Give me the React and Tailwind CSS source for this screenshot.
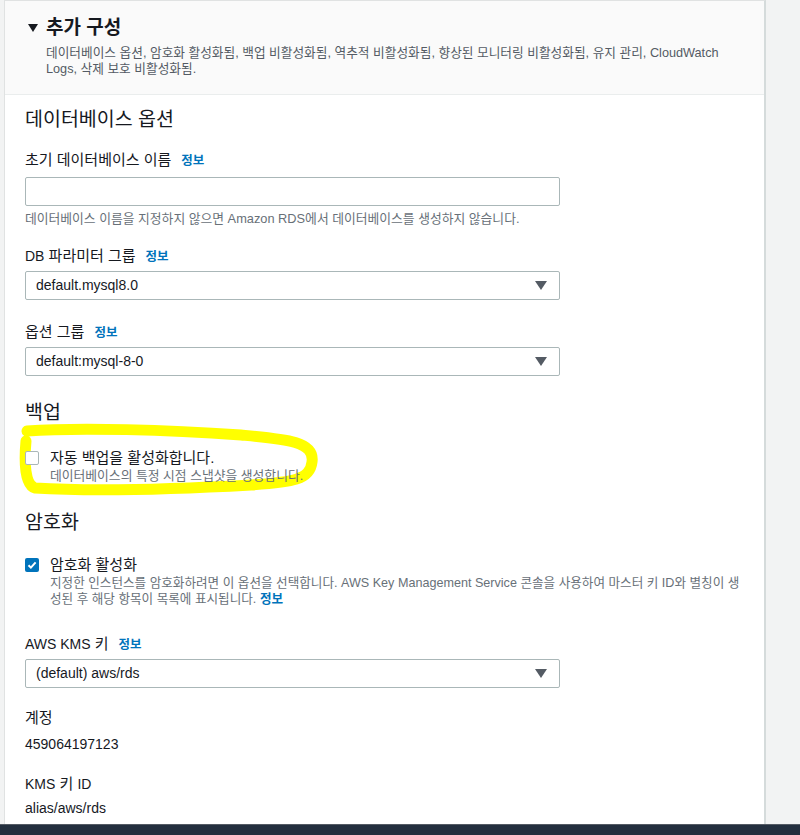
import React from "react";

const font = { fontFamily: '"Liberation Sans", "Noto Sans CJK KR", sans-serif' };

function Info() {
    return <span className="ml-[10px] text-[12.5px] font-bold text-[#0073bb]">정보</span>;
}

function Label({ children, info }) {
    return (
        <div className="text-[15px] leading-[20px] text-[#16191f]">
            {children}
            {info && <Info />}
        </div>
    );
}

function Select({ value }) {
    return (
        <div className="mt-[4px] flex h-[29px] w-[535px] items-center justify-between border border-[#aab7b8] rounded-[2px] pl-[10px] pr-[12px] text-[14px] text-[#16191f]">
            <span>{value}</span>
            <svg width="12" height="9" viewBox="0 0 12 9"><path d="M0 0h12L6 9z" fill="#545b64" /></svg>
        </div>
    );
}

function Checkbox({ checked }) {
    return checked ? (
        <div className="mt-[3px] flex h-[14px] w-[14px] shrink-0 items-center justify-center rounded-[2px] bg-[#0073bb]">
            <svg width="10" height="10" viewBox="0 0 10 10"><path d="M1.5 5.2l2.4 2.4L8.6 2.4" stroke="white" strokeWidth="2" fill="none" /></svg>
        </div>
    ) : (
        <div className="mt-[3px] h-[14px] w-[14px] shrink-0 rounded-[2px] border border-[#aab7b8] bg-white" />
    );
}

export default function App() {
    return (
        <div style={font} className="flex h-[835px] flex-col bg-[#f2f3f3]">
            <div className="flex flex-1 overflow-hidden">
                <div className="ml-[4px] w-[762px] border-l border-r-2 border-t border-[#e0e2e2] bg-white border-r-[#d5dbdb]">
                    <div className="h-[94px] border-b border-[#eaeded] bg-[#fafafa] pl-[23px] pt-[13px]">
                        <div className="flex items-center">
                            <svg width="10" height="8" viewBox="0 0 10 8"><path d="M0 0h10L5 8z" fill="#16191f" /></svg>
                            <span className="ml-[8px] text-[19px] font-bold leading-[28px] text-[#16191f]">추가 구성</span>
                        </div>
                        <div className="ml-[18px] mt-[3px] whitespace-nowrap text-[12.7px] leading-[16px] text-[#545b64]">
                            데이터베이스 옵션, 암호화 활성화됨, 백업 비활성화됨, 역추적 비활성화됨, 향상된 모니터링 비활성화됨, 유지 관리, CloudWatch<br />
                            Logs, 삭제 보호 비활성화됨.
                        </div>
                    </div>

                    <div className="pl-[20px] pt-[10px]">
                        <div className="text-[19.5px] leading-[28px] text-[#16191f]">데이터베이스 옵션</div>

                        <div className="mt-[17px]">
                            <Label info>초기 데이터베이스 이름</Label>
                            <div className="mt-[6px] h-[29px] w-[535px] rounded-[2px] border border-[#aab7b8]" />
                            <div className="mt-[5px] whitespace-nowrap text-[12.8px] leading-[16px] text-[#687078]">데이터베이스 이름을 지정하지 않으면 Amazon RDS에서 데이터베이스를 생성하지 않습니다.</div>
                        </div>

                        <div className="mt-[19px]">
                            <Label info><span className="text-[14px]">DB</span> 파라미터 그룹</Label>
                            <Select value="default.mysql8.0" />
                        </div>

                        <div className="mt-[22px]">
                            <Label info>옵션 그룹</Label>
                            <Select value="default:mysql-8-0" />
                        </div>

                        <div className="mt-[22px] text-[19.5px] leading-[28px] text-[#16191f]">백업</div>

                        <div className="relative mt-[22px]">
                            <svg className="pointer-events-none absolute left-[-6px] top-[-25px]" width="306" height="76" viewBox="0 0 306 76">
                                <path d="M8 8 C60 4 150 7 222 12 C266 16 296 18 293 39 C291 57 274 59 232 62 C160 66 80 69 16 65 C6 62 5 40 7 18" stroke="#ffff00" strokeWidth="11" fill="none" strokeLinecap="round" />
                            </svg>
                            <div className="relative flex gap-[11px]">
                                <Checkbox />
                                <div>
                                    <div className="text-[15px] leading-[20px] text-[#16191f]">자동 백업을 활성화합니다.</div>
                                    <div className="text-[12.8px] leading-[16px] text-[#687078]">데이터베이스의 특정 시점 스냅샷을 생성합니다.</div>
                                </div>
                            </div>
                        </div>

                        <div className="mt-[24px] text-[19.5px] leading-[28px] text-[#16191f]">암호화</div>

                        <div className="mt-[19px] flex gap-[11px]">
                            <Checkbox checked />
                            <div>
                                <div className="text-[15px] leading-[20px] text-[#16191f]">암호화 활성화</div>
                                <div className="whitespace-nowrap text-[12.6px] leading-[16px] text-[#687078]">
                                    지정한 인스턴스를 암호화하려면 이 옵션을 선택합니다. AWS Key Management Service 콘솔을 사용하여 마스터 키 ID와 별칭이 생<br />
                                    성된 후 해당 항목이 목록에 표시됩니다. <span className="font-bold text-[#0073bb]">정보</span>
                                </div>
                            </div>
                        </div>

                        <div className="mt-[27px]">
                            <Label info><span className="text-[14px]">AWS KMS</span> 키</Label>
                            <Select value="(default) aws/rds" />
                        </div>

                        <div className="mt-[20px] text-[15px] leading-[20px] text-[#16191f]">계정</div>
                        <div className="mt-[6px] text-[14px] leading-[20px] text-[#16191f]">459064197123</div>

                        <div className="mt-[20px] text-[15px] leading-[20px] text-[#16191f]"><span className="text-[14px]">KMS</span> 키 <span className="text-[14px]">ID</span></div>
                        <div className="mt-[4px] text-[14px] leading-[20px] text-[#16191f]">alias/aws/rds</div>
                    </div>
                </div>
            </div>
            <div className="h-[11px] shrink-0 border-t border-[#545b64] bg-[#232f3e]" />
        </div>
    );
}
